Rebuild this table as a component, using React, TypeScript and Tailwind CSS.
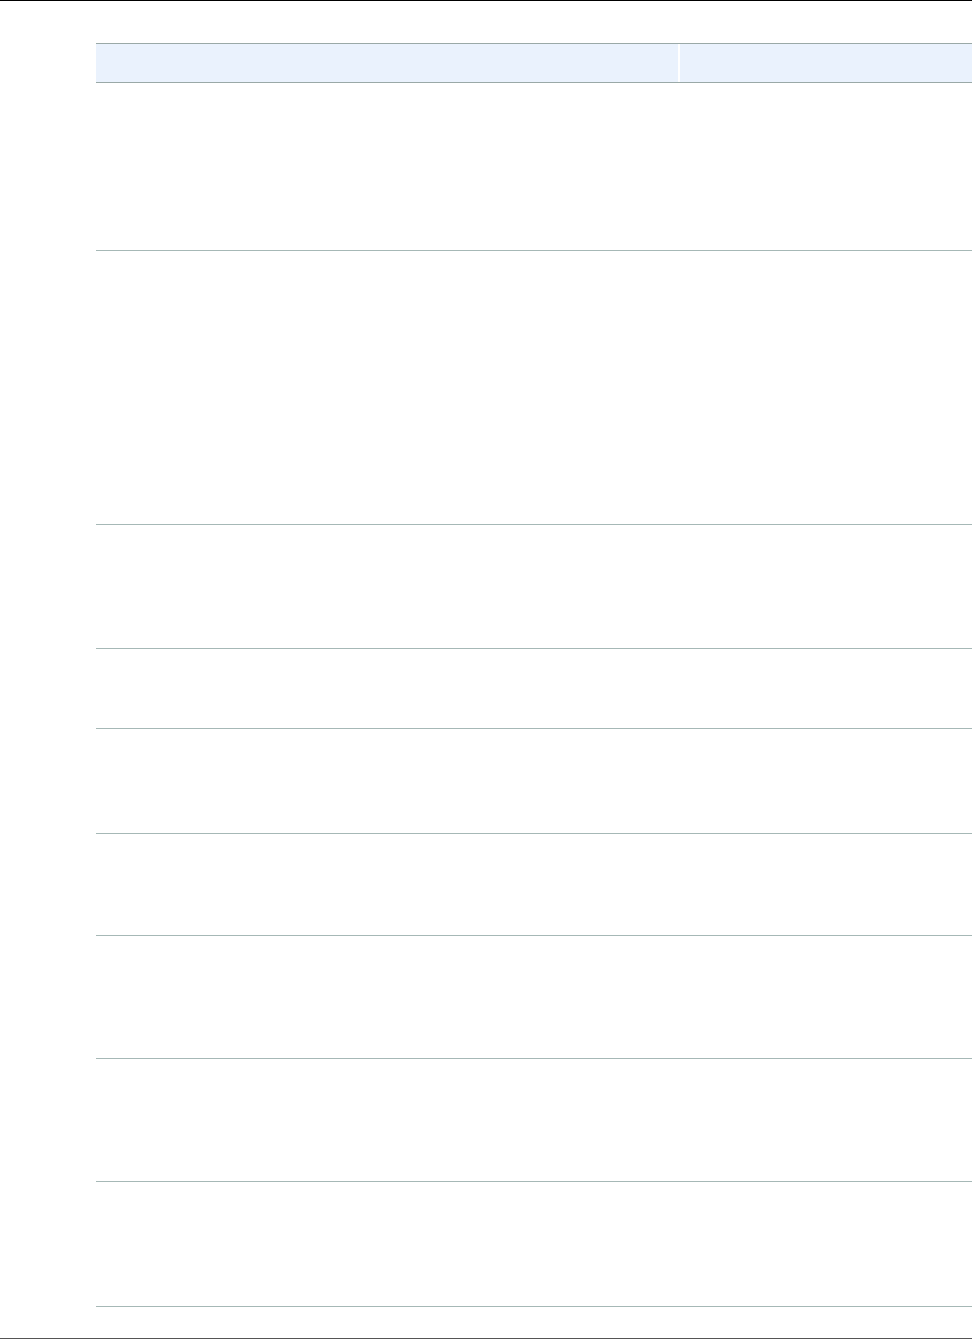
import React from "react";

const rows = [167, 273, 123, 79, 104, 101, 122, 122, 124];

export default function App() {
  return (
    <div className="w-[972px] h-[1339px] bg-white flex flex-col" style={{ fontFamily: '"Liberation Sans", Arial, sans-serif' }}>
      <div className="h-px bg-black shrink-0" />
      <div className="flex-1 pl-[96px] pt-[42px]">
        <div className="w-[876px]">
          <div className="flex h-[40px] border-t border-b border-[#9aa9a7] bg-[#eaf2fd]">
            <div className="w-[584px] border-r-2 border-white" />
            <div className="flex-1" />
          </div>
          {rows.map((h, i) => (
            <div key={i} className="flex border-b border-[#a6b8b6]" style={{ height: h + 1 }}>
              <div className="w-[584px]" />
              <div className="flex-1" />
            </div>
          ))}
        </div>
      </div>
      <div className="h-px bg-[#555555] shrink-0" />
    </div>
  );
}
